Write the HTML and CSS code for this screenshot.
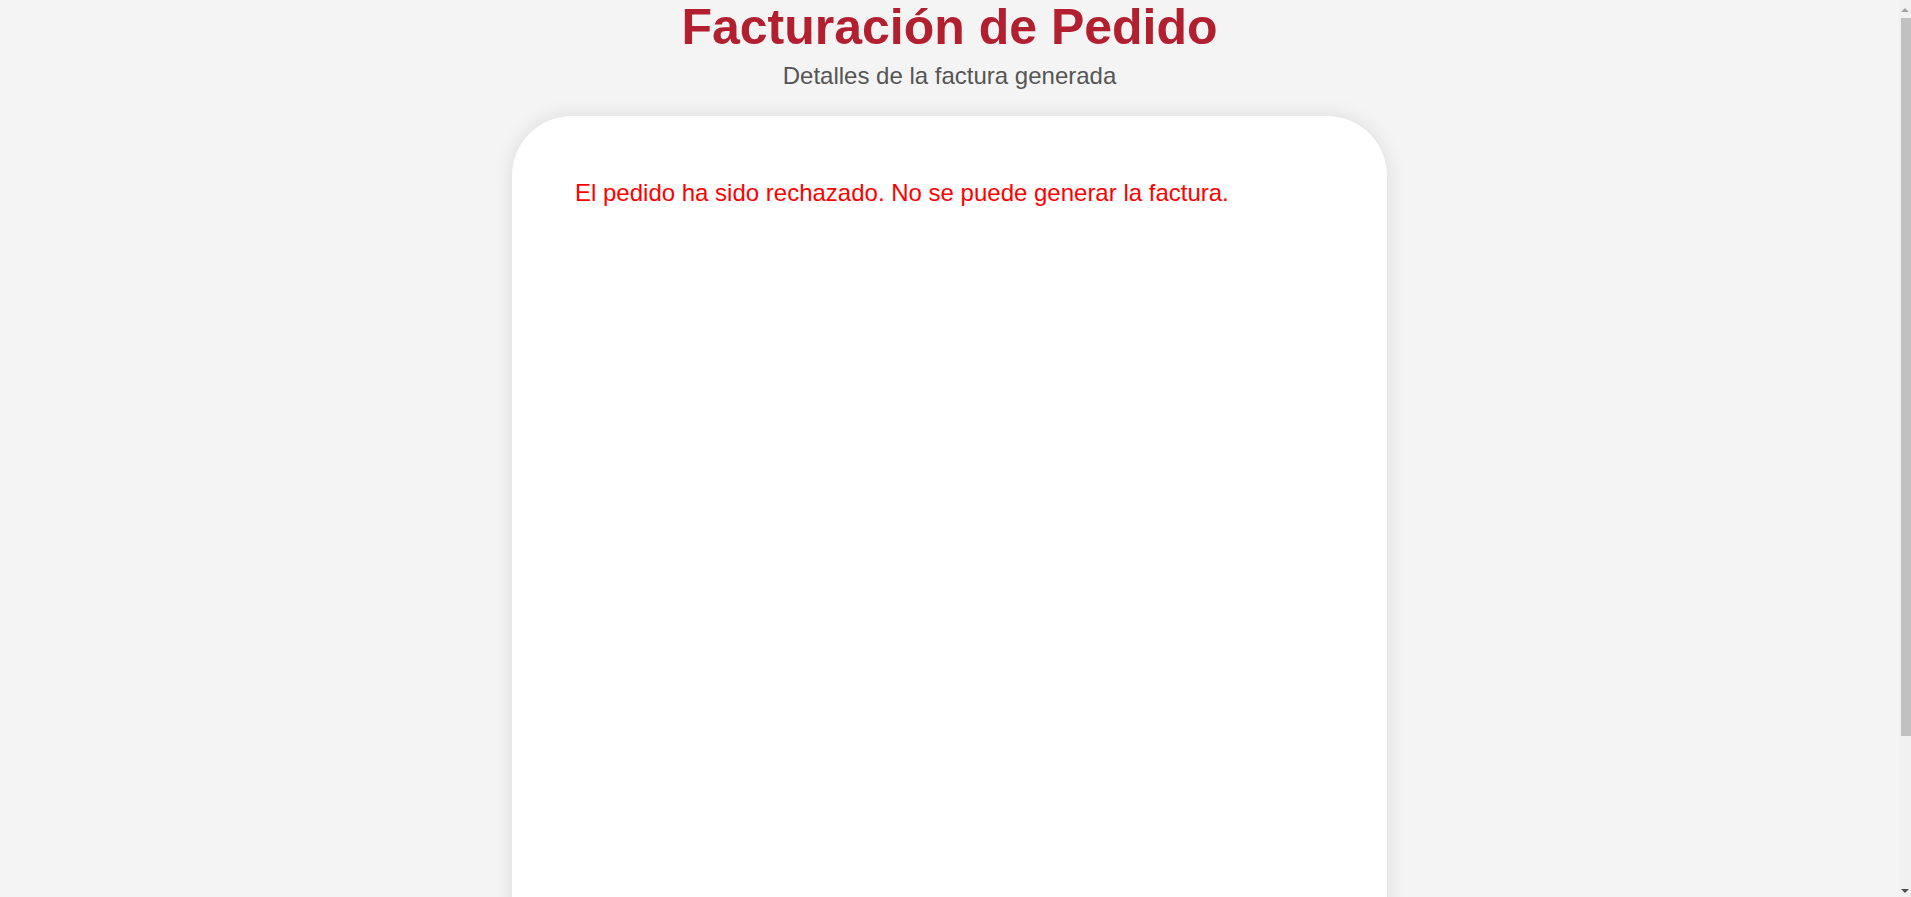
FILE: index.html
```html
<!DOCTYPE html>
<html lang="es">
<head>
<meta charset="utf-8">
<title>Facturación de Pedido</title>
<link rel="stylesheet" href="styles.css">
</head>
<body>
  <header class="page-header">
    <h1 class="title">Facturación de Pedido</h1>
    <p class="subtitle">Detalles de la factura generada</p>
  </header>
  <main class="card">
    <p class="error">El pedido ha sido rechazado. No se puede generar la factura.</p>
  </main>
  <div class="scrollbar" aria-hidden="true">
    <span class="arrow arrow-up"></span>
    <span class="thumb"></span>
    <span class="arrow arrow-down"></span>
  </div>
</body>
</html>
```

FILE: styles.css
```css
html, body {
  margin: 0;
  padding: 0;
}
body {
  background: #f4f4f4;
  font-family: "Liberation Sans", Arial, sans-serif;
  display: flex;
  flex-direction: column;
  align-items: center;
  padding-right: 12px;
  padding-bottom: 30px;
}
.page-header {
  text-align: center;
}
.title {
  margin: 0;
  font-size: 50px;
  line-height: 1.1;
  font-weight: bold;
  color: #b21f2e;
}
.subtitle {
  margin: 7px 0 0;
  font-size: 24px;
  color: #555555;
}
.card {
  margin-top: 26px;
  width: 875px;
  min-height: 900px;
  box-sizing: border-box;
  padding: 63px 63px;
  background: #ffffff;
  border-radius: 60px;
  box-shadow: 0 0 20px rgba(0, 0, 0, 0.1);
}
.error {
  margin: 0;
  font-size: 24px;
  color: #ff0000;
}
.scrollbar {
  position: fixed;
  top: 0;
  right: 0;
  width: 12px;
  height: 100vh;
  background: #f1f1f1;
  display: flex;
  flex-direction: column;
  align-items: center;
}
.arrow {
  display: block;
  width: 0;
  height: 0;
  border-left: 4px solid transparent;
  border-right: 4px solid transparent;
  margin: 8px 0 6px;
}
.arrow-up {
  border-bottom: 4px solid #a3a3a3;
}
.arrow-down {
  margin: auto 0 4px;
  border-top: 4px solid #505050;
}
.thumb {
  display: block;
  width: 10px;
  margin-left: 2px;
  height: 718px;
  background: #c1c1c1;
}
```
